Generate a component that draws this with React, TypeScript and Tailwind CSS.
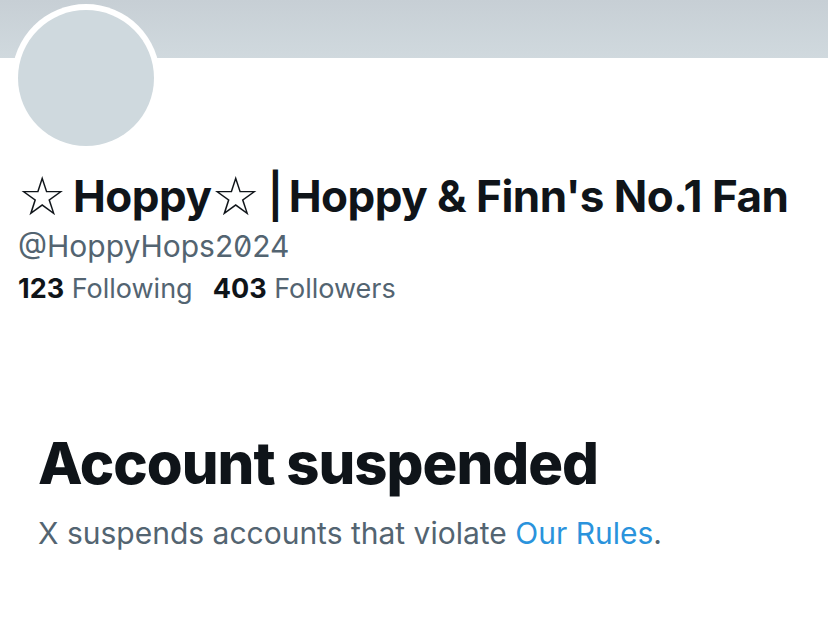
import React from "react";

export default function App() {
  return (
    <div className="w-[828px] h-[622px] bg-white overflow-hidden font-['Inter',sans-serif] text-[#0f1419]">
      <div className="h-[58px] bg-gradient-to-b from-[#c7cfd5] to-[#d0d9de]" />
      <div className="ml-[12px] -mt-[54px] w-[148px] h-[148px] rounded-full bg-white p-[6px]">
        <div className="w-full h-full rounded-full bg-[#cfd9de]" />
      </div>
      <div className="pl-[18px] mt-[16px]">
        <div className="h-[52px] text-[44px] leading-[52px] font-bold tracking-[-0.5px] whitespace-nowrap flex items-baseline">
          <span className="font-['DejaVu_Sans',sans-serif] font-normal text-[54px] leading-[52px] translate-y-[3px]">☆</span>
          <span className="ml-[7px]">Hoppy</span>
          <span className="font-['DejaVu_Sans',sans-serif] font-normal text-[54px] leading-[52px] translate-y-[3px]">☆</span>
          <span className="ml-[8px] font-semibold">|</span>
          <span className="ml-[6px]">Hoppy &amp; Finn's No.1 Fan</span>
        </div>
        <div className="mt-[8px] text-[30px] leading-[36px] text-[#536471] [font-feature-settings:'zero']">@HoppyHops2024</div>
        <div className="mt-[9px] text-[27px] leading-[32px] flex gap-[20px]">
          <div>
            <span className="font-bold">123</span> <span className="text-[#536471]">Following</span>
          </div>
          <div>
            <span className="font-bold">403</span> <span className="text-[#536471]">Followers</span>
          </div>
        </div>
      </div>
      <div className="pl-[38px] mt-[126px]">
        <div className="text-[58px] leading-[64px] font-extrabold tracking-[-1px]">Account suspended</div>
        <div className="mt-[20px] text-[30px] leading-[36px] text-[#536471]">
          X suspends accounts that violate <span className="text-[#2a93dc]">Our Rules</span>.
        </div>
      </div>
    </div>
  );
}
